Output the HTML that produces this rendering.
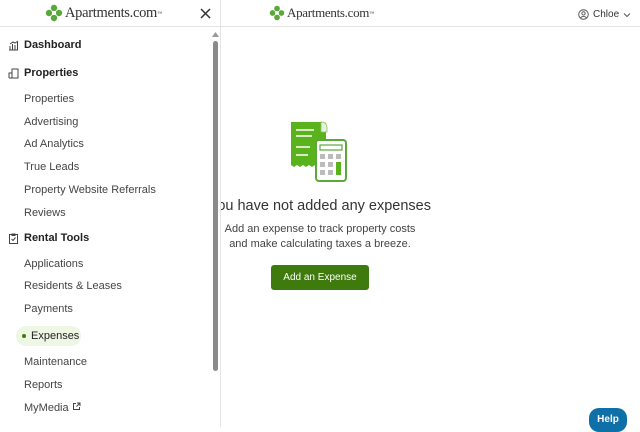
<!DOCTYPE html>
<html><head><meta charset="utf-8"><style>
*{box-sizing:border-box;margin:0;padding:0}
body{width:640px;height:427px;overflow:hidden;background:#fff;font-family:"Liberation Sans",sans-serif;color:#222;position:relative}
.hdr{position:absolute;top:0;left:0;width:640px;height:27px;border-bottom:1px solid #e4e4e4;background:#fff}
.logo{position:absolute;display:flex;align-items:center;font-family:"Liberation Serif",serif;color:#333;letter-spacing:-0.3px}
.logo sup{font-size:5px;vertical-align:top;margin-top:2px}
.side{position:absolute;top:0;left:0;width:221px;height:427px;background:#fff;border-right:1px solid #e4e4e4;z-index:2}
.side .top{height:27px;border-bottom:1px solid #e4e4e4;position:relative}
.sec{position:absolute;left:8px;font-size:11px;font-weight:bold;color:#222;display:flex;align-items:center}
.sec svg{margin-right:5px}
.it{position:absolute;left:24px;font-size:11px;color:#444}
.main{position:absolute;left:0;top:0;width:640px;text-align:center;z-index:1}
</style></head><body>
<div class="hdr">
 <div class="logo" style="left:269px;top:5px;font-size:13px"><svg width="16" height="16" viewBox="0 0 18 18"><g fill="#5aa83a"><circle cx="9" cy="4" r="3.2"/><circle cx="14" cy="9" r="3.2"/><circle cx="9" cy="14" r="3.2"/><circle cx="4" cy="9" r="3.2"/></g><circle cx="9" cy="9" r="2" fill="#fff"/></svg><span style="margin-left:2px">Apartments.com</span><sup>™</sup></div>
 <div style="position:absolute;left:578px;top:9px;font-size:10px;display:flex;align-items:center;color:#333"><svg width="11" height="11" viewBox="0 0 12 12" fill="none" stroke="#555" stroke-width="1"><circle cx="6" cy="6" r="5.2"/><circle cx="6" cy="4.8" r="1.8"/><path d="M2.8 9.6c1.6-2 4.8-2 6.4 0"/></svg><span style="margin-left:4px">Chloe</span><svg width="8" height="6" viewBox="0 0 8 6" style="margin-left:4px"><path d="M1 1.5l3 3 3-3" stroke="#555" fill="none"/></svg></div>
</div>
<div class="main">
 <svg style="position:absolute;left:288px;top:120px" width="60" height="63" viewBox="0 0 60 63">
  <path d="M3 2h30l5 1v42l-2 2-3-2-3 2-3-2-3 2-3-2-3 2-3-2-3 2-3-2-3 2-3-2z" fill="#5ab21d"/>
  <path d="M33 2q6 0 6 6v4h-6z" fill="#e8f0e0" stroke="#8fbf60" stroke-width=".8"/>
  <g stroke="#fff" stroke-width="1.4"><path d="M8 10h18M8 16h16M8 27h14M8 35h12"/></g>
  <rect x="28" y="20" width="30" height="41" rx="3" fill="#fff" stroke="#5aa83a" stroke-width="2"/>
  <rect x="32" y="25" width="22" height="5" fill="none" stroke="#5aa83a" stroke-width="1.2"/>
  <g fill="#bbb"><rect x="32" y="34" width="5" height="5"/><rect x="40" y="34" width="5" height="5"/><rect x="48" y="34" width="5" height="5"/><rect x="32" y="42" width="5" height="5"/><rect x="40" y="42" width="5" height="5"/><rect x="32" y="50" width="5" height="5"/><rect x="40" y="50" width="5" height="5"/></g>
  <rect x="48" y="42" width="5" height="13" fill="#5ab21d"/>
 </svg>
 <div style="position:absolute;top:198px;width:640px;font-size:14.5px;color:#333">You have not added any expenses</div>
 <div style="position:absolute;top:222px;width:640px;font-size:11px;color:#444;line-height:15px">Add an expense to track property costs<br>and make calculating taxes a breeze.</div>
 <div style="position:absolute;left:271px;top:265px;width:98px;height:25px;background:#3e7a0c;border-radius:3px;color:#fff;font-size:10px;line-height:25px">Add an Expense</div>
</div>
<div class="side">
 <div class="top">
  <div class="logo" style="left:45px;top:4px;font-size:14.5px"><svg width="18" height="18" viewBox="0 0 18 18"><g fill="#5aa83a"><circle cx="9" cy="4" r="3.2"/><circle cx="14" cy="9" r="3.2"/><circle cx="9" cy="14" r="3.2"/><circle cx="4" cy="9" r="3.2"/></g><circle cx="9" cy="9" r="2" fill="#fff"/></svg><span style="margin-left:2px">Apartments.com</span><sup>™</sup></div>
  <svg style="position:absolute;left:200px;top:8px" width="11" height="11" viewBox="0 0 11 11"><path d="M1 1l9 9M10 1l-9 9" stroke="#333" stroke-width="1.5"/></svg>
 </div>
 <div class="sec" style="top:39px"><svg width="11" height="11" viewBox="0 0 11 11" fill="none" stroke="#444"><path d="M1 10h9M2 10V6M4.5 10V4M7 10V5M9.5 10V2M2 4l3-2 2 1 3-2"/></svg>Dashboard</div>
 <div class="sec" style="top:67px"><svg width="11" height="11" viewBox="0 0 11 11" fill="none" stroke="#444"><path d="M4 10V1h6v9zM1 10V5h3M1 10h9"/></svg>Properties</div>
 <div class="it" style="top:93px">Properties</div>
 <div class="it" style="top:116px">Advertising</div>
 <div class="it" style="top:138px">Ad Analytics</div>
 <div class="it" style="top:161px">True Leads</div>
 <div class="it" style="top:184px">Property Website Referrals</div>
 <div class="it" style="top:207px">Reviews</div>
 <div class="sec" style="top:232px"><svg width="11" height="11" viewBox="0 0 11 11" fill="none" stroke="#444"><rect x="1.5" y="1.5" width="8" height="9"/><path d="M4 1h3v1.5H4zM3.5 6l1.5 1.5 2.5-3"/></svg>Rental Tools</div>
 <div class="it" style="top:258px">Applications</div>
 <div class="it" style="top:280px">Residents &amp; Leases</div>
 <div class="it" style="top:303px">Payments</div>
 <div style="position:absolute;left:16px;top:326px;width:65px;height:20px;border-radius:10px;background:#eef6e4"></div>
 <div style="position:absolute;left:22px;top:334px;width:4px;height:4px;border-radius:50%;background:#3e7a0c"></div>
 <div class="it" style="top:330px;left:31px;color:#222">Expenses</div>
 <div class="it" style="top:356px">Maintenance</div>
 <div class="it" style="top:379px">Reports</div>
 <div class="it" style="top:402px">MyMedia <svg width="9" height="9" viewBox="0 0 9 9" fill="none" stroke="#444"><path d="M4 1.5H1.5v6h6V5M5 1h3v3M8 1L4.5 4.5"/></svg></div>
 <svg style="position:absolute;left:212px;top:32px" width="7" height="5"><path d="M3.5 0L7 5H0z" fill="#999"/></svg>
 <div style="position:absolute;left:213px;top:41px;width:5px;height:330px;border-radius:3px;background:#8a8a8a"></div>
</div>
<div style="position:absolute;left:589px;top:408px;width:38px;height:24px;border-radius:10px;background:#0f6fa8;color:#fff;font-size:10px;font-weight:bold;text-align:center;line-height:24px;z-index:3">Help</div>
</body></html>
